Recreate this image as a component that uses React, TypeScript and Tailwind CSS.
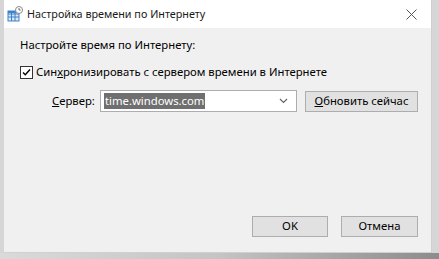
const font = "font-['Segoe_UI','Noto_Sans','Open_Sans',sans-serif]";

const AppIcon = () => (
  <svg width="16" height="16" viewBox="0 0 16 16" className="shrink-0">
    {/* calendar grid */}
    <rect x="1" y="5" width="11" height="10" fill="#dbe9f7" stroke="#3c82c8" strokeWidth="1" />
    <path d="M1 8h11M1 11h11M4.5 5v10M8 5v10" stroke="#3c82c8" strokeWidth="1" />
    <rect x="1" y="5" width="11" height="2" fill="#3c82c8" />
    {/* clock */}
    <circle cx="12" cy="4" r="3.5" fill="#fff" stroke="#8a8a8a" strokeWidth="1" />
    <path d="M12 2v2h1.6" stroke="#5a5a5a" strokeWidth="0.9" fill="none" />
  </svg>
);

const Button = ({ children, className = "" }: { children: React.ReactNode; className?: string }) => (
  <div
    className={`flex h-[21px] items-center justify-center border border-[#adadad] bg-[#e1e1e1] text-[11.3px] text-black ${className}`}
  >
    {children}
  </div>
);

export default function App() {
  return (
    <div className={`${font} flex h-[259px] w-[439px] flex-col bg-[#d6d6d6]`}>
      <div className="flex h-[253px] pl-[4px] pr-[8px]">
        <div className="flex flex-1 flex-col border border-[#d0d0d0] border-t-0 border-l-0">
          {/* Title bar */}
          <div className="flex h-[28px] items-center bg-white pl-[3px] pr-[14px]">
            <AppIcon />
            <span className="ml-[4px] text-[10.8px] text-[#1a1a1a]">Настройка времени по Интернету</span>
            <div className="ml-auto">
              <svg width="11" height="11" viewBox="0 0 11 11">
                <path d="M0.5 0.5l10 10M10.5 0.5l-10 10" stroke="#555" strokeWidth="1" />
              </svg>
            </div>
          </div>

          {/* Body */}
          <div className="flex flex-1 flex-col bg-[#f0f0f0] pl-[16px] pr-[13px] text-[11.3px] text-black">
            <div className="mt-[9px] leading-[16px]">Настройте время по Интернету:</div>

            <div className="mt-[11px] flex items-center leading-[16px]">
              <div className="flex h-[13px] w-[13px] items-center justify-center border border-[#333] bg-white">
                <svg width="9" height="9" viewBox="0 0 9 9">
                  <path d="M1 4.5l2.3 2.3L8 1.5" stroke="#000" strokeWidth="1.4" fill="none" />
                </svg>
              </div>
              <span className="ml-[3px]">
                Син<span className="underline">х</span>ронизировать с сервером времени в Интернете
              </span>
            </div>

            <div className="mt-[10px] flex items-center">
              <span className="ml-[32px] w-[48px]">
                <span className="underline">С</span>ервер:
              </span>
              <div className="flex h-[22px] w-[197px] items-center border border-[#abadb3] bg-white pl-[3px] pr-[8px]">
                <span className="bg-[#6f6f6f] px-[1px] leading-[16px] text-white">time.windows.com</span>
                <svg className="ml-auto" width="9" height="6" viewBox="0 0 9 6">
                  <path d="M1 1l3.5 3.5L8 1" stroke="#666" strokeWidth="1.2" fill="none" />
                </svg>
              </div>
              <Button className="ml-[8px] w-[113px]">
                <span>
                  <span className="underline">О</span>бновить сейчас
                </span>
              </Button>
            </div>

            <div className="mt-auto mb-[15px] flex justify-end gap-[13px]">
              <Button className="w-[76px]">OK</Button>
              <Button className="w-[77px]">Отмена</Button>
            </div>
          </div>
        </div>
      </div>
      <div className="flex-1 bg-gradient-to-r from-[#dadada] via-[#c4c4c4] to-[#8c8c8c]" />
    </div>
  );
}
